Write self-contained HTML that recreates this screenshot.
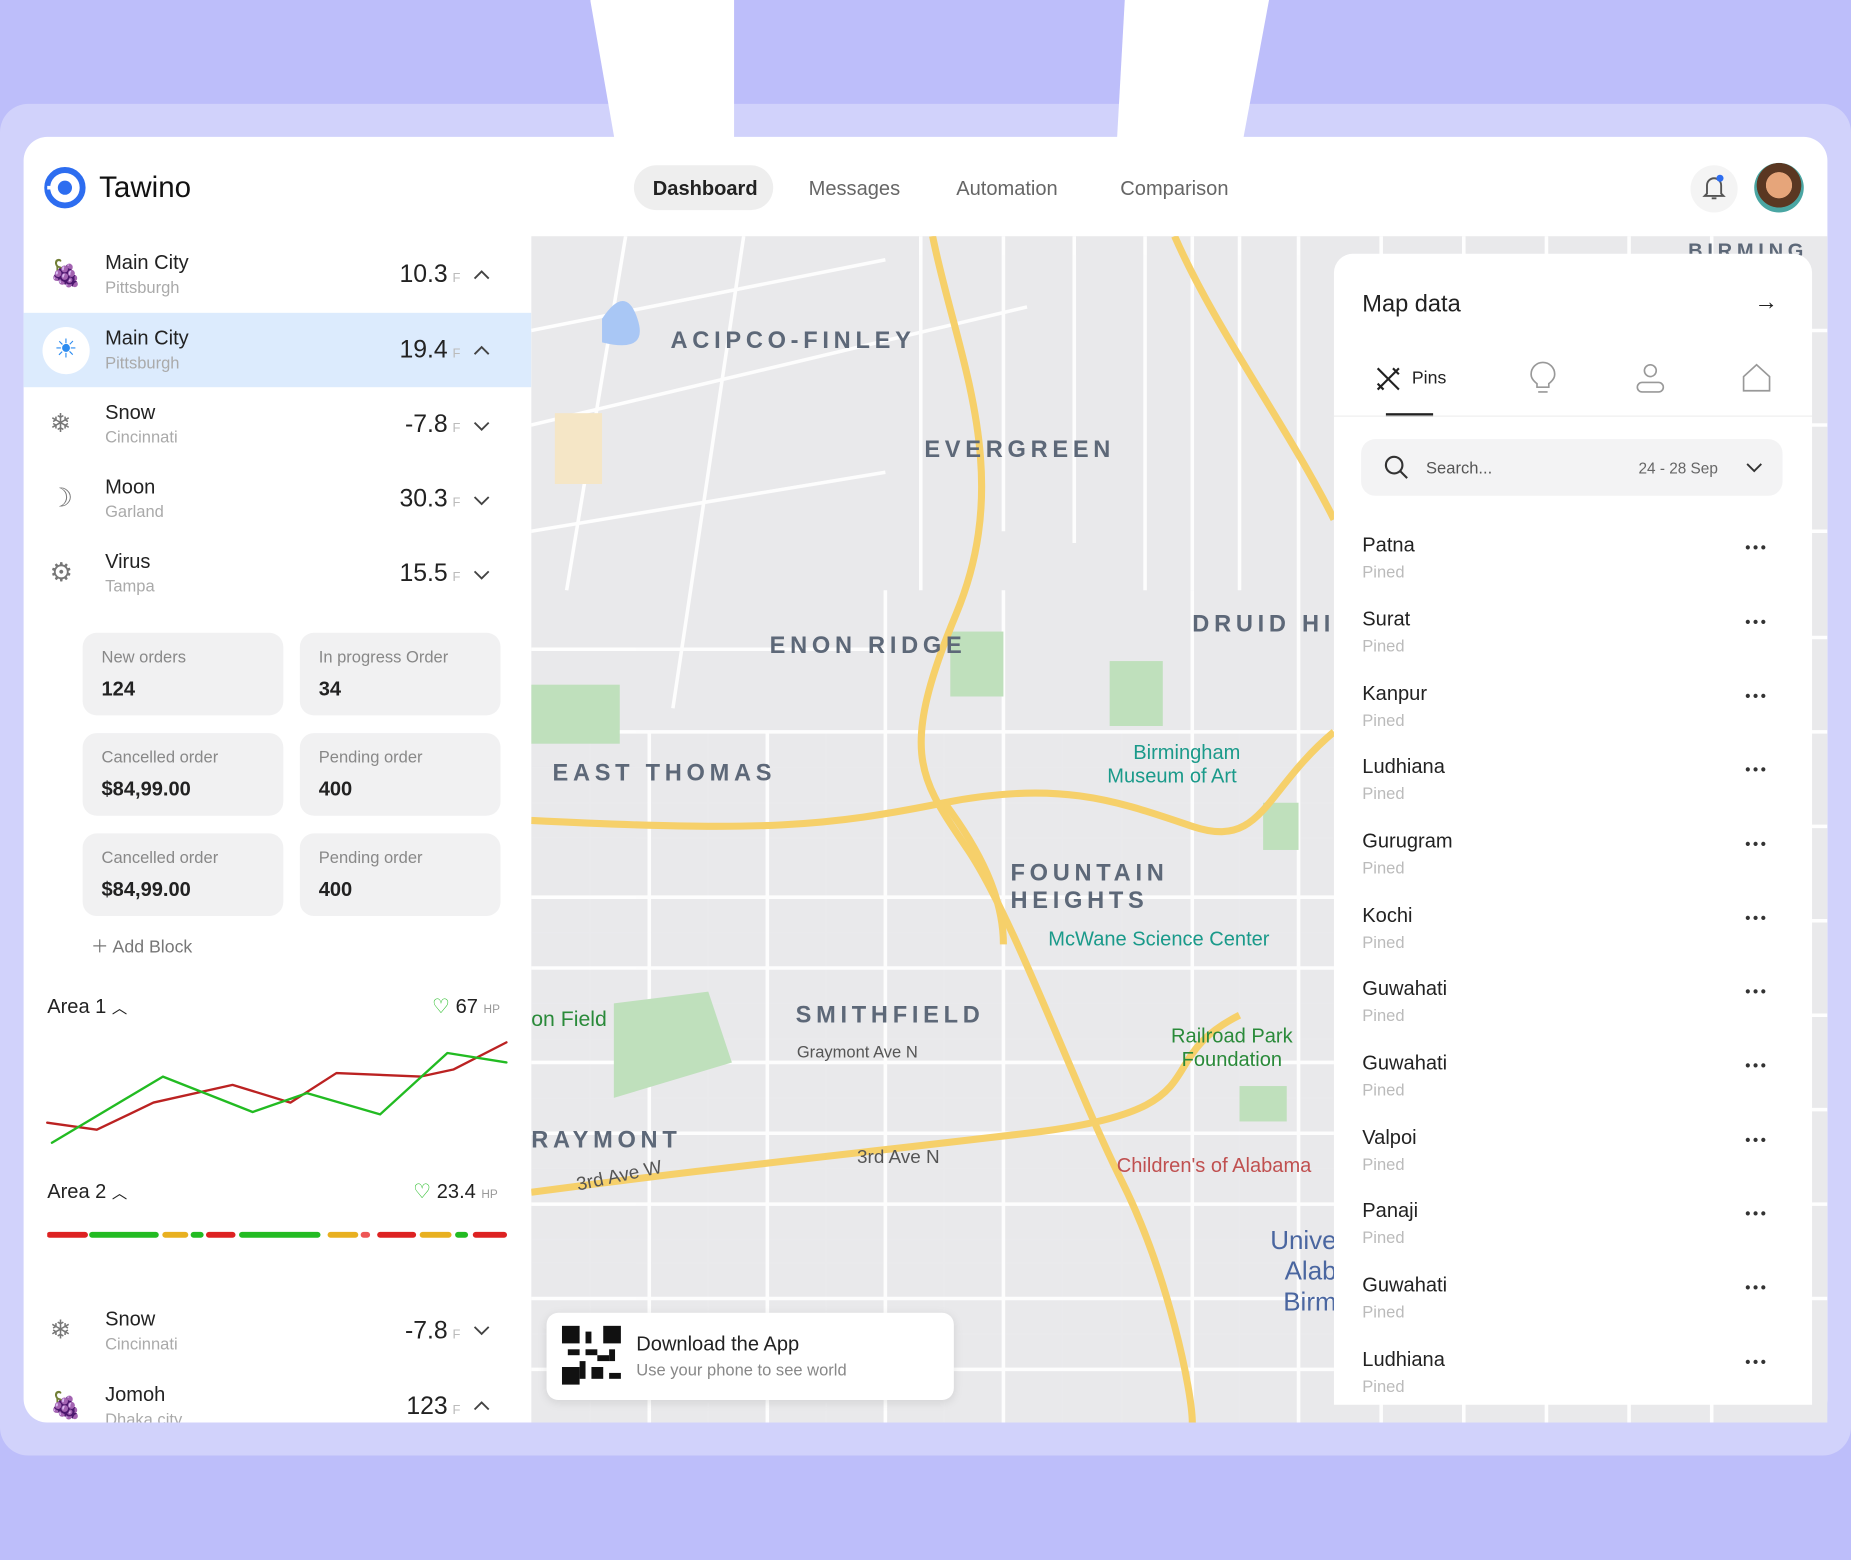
<!DOCTYPE html>
<html><head><meta charset="utf-8"><style>
*{margin:0;padding:0;box-sizing:border-box}
body{width:1851px;height:1560px;overflow:hidden;background:#bdbefa;font-family:"Liberation Sans",sans-serif;color:#222}
#w{position:absolute;left:0;top:0;width:1568px;height:1321px;transform:scale(1.18049);transform-origin:0 0}
.a{position:absolute}
.card{position:absolute;width:170px;height:70px;background:#f1f1f2;border-radius:12px;padding:12px 16px}
.card .l{font-size:14px;color:#888}.card .v{font-size:17px;font-weight:bold;margin-top:10px;color:#222}
.row{position:absolute;left:20px;width:430px;height:63px}
.row .n{position:absolute;left:69px;top:12px;font-size:17px}
.row .c{position:absolute;left:69px;top:34px;font-size:14px;color:#aaa}
.row .v{position:absolute;right:60px;top:20px;font-size:21px}
.row .v small{font-size:11px;color:#bbb;margin-left:4px}
.row .ic{position:absolute;left:22px;top:18px;font-size:22px;color:#777}
.pin{position:absolute;left:1154px;width:360px}
.pin .n{font-size:17px;color:#222}.pin .p{font-size:14px;color:#bbb;margin-top:4px}
.pin .d{position:absolute;right:16px;top:4px;font-size:13px;letter-spacing:2px;color:#333}
.ml{position:absolute;font-size:20px;letter-spacing:4px;color:#5d6878;font-weight:bold}
.ms{position:absolute;font-size:14px;color:#555}
</style></head><body><div id="w">
<div class="a" style="left:0;top:88px;width:1568px;height:1145px;background:#d1d2fb;border-radius:24px"></div>
<div class="a" style="left:500px;top:0;width:122px;height:140px;background:#fff;clip-path:polygon(0 0,100% 0,100% 100%,20% 100%)"></div>
<div class="a" style="left:945px;top:0;width:130px;height:140px;background:#fff;clip-path:polygon(0 100%,6% 0,100% 0,80% 100%)"></div>
<div class="a" style="left:20px;top:116px;width:1528px;height:1089px;background:#fff;border-radius:20px;overflow:hidden"></div>
<svg class="a" style="left:37px;top:141px" width="36" height="36" viewBox="0 0 36 36"><circle cx="18" cy="18" r="15" fill="none" stroke="#2d6df0" stroke-width="5"/><circle cx="18" cy="18" r="6" fill="#2d6df0"/><path d="M3 18h6" stroke="#fff" stroke-width="3"/></svg>
<div class="a" style="left:84px;top:145px;font-size:25px;color:#111">Tawino</div>
<div class="a" style="left:537px;top:140px;width:118px;height:38px;background:#eee;border-radius:19px"></div>
<div class="a" style="left:553px;top:150px;font-size:17px;font-weight:bold">Dashboard</div>
<div class="a" style="left:685px;top:150px;font-size:17px;color:#666">Messages</div>
<div class="a" style="left:810px;top:150px;font-size:17px;color:#666">Automation</div>
<div class="a" style="left:949px;top:150px;font-size:17px;color:#666">Comparison</div>
<div class="a" style="left:1432px;top:140px;width:40px;height:40px;border-radius:20px;background:#f4f4f4"></div>
<svg class="a" style="left:1440px;top:146px" width="24" height="26" viewBox="0 0 24 26"><path d="M6 18V11a6 6 0 0 1 12 0v7l2 2H4z M10 22h4" fill="none" stroke="#555" stroke-width="1.6"/><circle cx="17" cy="5" r="3" fill="#2d6df0"/></svg>
<div class="a" style="left:1486px;top:138px;width:42px;height:42px;border-radius:21px;background:radial-gradient(circle at 50% 45%,#e6a57a 0 35%,#5a3722 36% 60%,#4aa6a3 61%)"></div>
<div class="row" style="top:201px"><div class="ic" style="color:#6a3b9a">🍇</div><div class="n">Main City</div><div class="c">Pittsburgh</div><div class="v">10.3<small>F</small></div></div>
<div class="row" style="top:265px;background:#dcebfd"><div class="a" style="left:16px;top:12px;width:40px;height:40px;border-radius:20px;background:#fff"></div><div class="ic" style="color:#2d8cf0;left:26px">☀</div><div class="n">Main City</div><div class="c">Pittsburgh</div><div class="v">19.4<small>F</small></div></div>
<div class="row" style="top:328px"><div class="ic">❄</div><div class="n">Snow</div><div class="c">Cincinnati</div><div class="v">-7.8<small>F</small></div></div>
<div class="row" style="top:391px"><div class="ic">☽</div><div class="n">Moon</div><div class="c">Garland</div><div class="v">30.3<small>F</small></div></div>
<div class="row" style="top:454px"><div class="ic">⚙</div><div class="n">Virus</div><div class="c">Tampa</div><div class="v">15.5<small>F</small></div></div>
<svg class="a" style="left:398px;top:225px" width="20" height="280" viewBox="0 0 20 280" fill="none" stroke="#444" stroke-width="1.6"><path d="M4 11l6-6 6 6M4 75l6-6 6 6M4 133l6 6 6-6M4 196l6 6 6-6M4 259l6 6 6-6"/></svg>
<div class="card" style="left:70px;top:536px"><div class="l">New orders</div><div class="v">124</div></div>
<div class="card" style="left:254px;top:536px"><div class="l">In progress Order</div><div class="v">34</div></div>
<div class="card" style="left:70px;top:621px"><div class="l">Cancelled order</div><div class="v">$84,99.00</div></div>
<div class="card" style="left:254px;top:621px"><div class="l">Pending order</div><div class="v">400</div></div>
<div class="card" style="left:70px;top:706px"><div class="l">Cancelled order</div><div class="v">$84,99.00</div></div>
<div class="card" style="left:254px;top:706px"><div class="l">Pending order</div><div class="v">400</div></div>
<div class="a" style="left:77px;top:791px;font-size:15px;color:#777">＋ Add Block</div>
<div class="a" style="left:40px;top:843px;font-size:17px">Area 1 <span style="font-size:13px">︿</span></div>
<div class="a" style="left:366px;top:843px;font-size:17px"><span style="color:#2b2">♡</span> 67 <span style="font-size:10px;color:#999">HP</span></div>
<svg class="a" style="left:38px;top:875px" width="395" height="100" viewBox="0 0 395 100" fill="none" stroke-width="2" stroke-linejoin="round" stroke-linecap="round"><polyline points="2,76 44,82 92,59 159,44 208,59 247,34 318,37 346,31 391,8" stroke="#b22"/><polyline points="6,93 100,37 176,67 222,51 284,69 341,17 391,25" stroke="#2b2"/></svg>
<div class="a" style="left:40px;top:1000px;font-size:17px">Area 2 <span style="font-size:13px">︿</span></div>
<div class="a" style="left:350px;top:1000px;font-size:17px"><span style="color:#2b2">♡</span> 23.4 <span style="font-size:10px;color:#999">HP</span></div>
<svg class="a" style="left:40px;top:1042px" width="390" height="8"><g stroke-width="5" stroke-linecap="round"><path d="M2 4h30" stroke="#d22"/><path d="M38 4h54" stroke="#2b2"/><path d="M100 4h17" stroke="#e8b020"/><path d="M124 4h6" stroke="#2b2"/><path d="M137 4h20" stroke="#d22"/><path d="M165 4h64" stroke="#2b2"/><path d="M240 4h21" stroke="#e8b020"/><path d="M268 4h3" stroke="#e55"/><path d="M282 4h28" stroke="#d22"/><path d="M318 4h22" stroke="#e8b020"/><path d="M348 4h6" stroke="#2b2"/><path d="M363 4h24" stroke="#d22"/></g></svg>
<div class="row" style="top:1096px"><div class="ic">❄</div><div class="n">Snow</div><div class="c">Cincinnati</div><div class="v">-7.8<small>F</small></div></div>
<div class="a" style="left:20px;top:1160px;width:430px;height:45px;overflow:hidden"><div class="row" style="left:0;top:0"><div class="ic" style="color:#a33">🍇</div><div class="n">Jomoh</div><div class="c">Dhaka city</div><div class="v">123<small>F</small></div></div></div>
<svg class="a" style="left:398px;top:1118px" width="20" height="80" fill="none" stroke="#444" stroke-width="1.6"><path d="M4 6l6 6 6-6M4 76l6-6 6 6"/></svg>
<svg class="a" style="left:450px;top:200px" width="1098" height="1005" viewBox="0 0 1098 1005">
<rect width="1098" height="1005" fill="#e9e9eb"/>
<g stroke="#ececee" stroke-width="1" opacity=".6"><path d="M0 450H680M0 480H680M0 510H680M0 590H680M0 650H680M0 680H680M0 730H680M0 790H680M0 850H680M0 870H680M0 930H680M50 420V1005M150 420V1005M250 420V1005M350 420V1005M450 420V1005M500 420V1005M600 420V1005"/></g>
<g stroke="#fff" stroke-width="3" fill="none" opacity=".95">
<path d="M0 80L300 20M0 160L420 60M0 250L300 200M80 0L30 300M180 0L120 400"/>
<path d="M0 420H680M0 560H700M0 620H680M0 760H680M0 900H680M100 420V1005M200 420V1005M300 300V1005M400 300V1005M560 300V1005M650 0V1005"/>
<path d="M330 0V300M400 0V250M460 0V260M520 0V300M560 0V300M600 0V300M720 0V1005M790 0V1005M860 0V1005M930 0V1005M1000 0V1005M680 80H1098M680 160H1098M680 250H1098M680 340H1098M680 420H1098M680 500H1098M680 580H1098M680 660H1098M680 740H1098M680 820H1098M680 900H1098"/>
<path d="M0 350H300M0 700H680M0 820H680M0 960H680"/>
</g>
<path d="M60 70q20-30 30 0t-30 20z" fill="#a9c7f5"/>
<rect x="0" y="380" width="75" height="50" fill="#bfe0bc"/>
<rect x="355" y="335" width="45" height="55" fill="#bfe0bc"/>
<rect x="490" y="360" width="45" height="55" fill="#bfe0bc"/>
<path d="M70 650l80-10 20 60-100 30z" fill="#bfe0bc"/>
<rect x="620" y="480" width="30" height="40" fill="#bfe0bc"/>
<rect x="600" y="720" width="40" height="30" fill="#bfe0bc"/>
<rect x="20" y="150" width="40" height="60" fill="#f5e6c6"/>
<g stroke="#f6d06a" stroke-width="6" fill="none">
<path d="M340 0C360 100 410 200 360 320S330 460 370 520 460 720 500 800 560 980 560 1005"/>
<path d="M0 495C200 505 250 500 350 480S500 480 560 500 620 470 680 420"/>
<path d="M545 0C580 80 640 160 680 240"/>
<path d="M0 810C150 790 250 780 420 760S520 700 600 660"/>
<path d="M350 480C380 520 400 560 400 600"/>
</g>
</svg>
<div class="ml" style="left:568px;top:278px">ACIPCO-FINLEY</div>
<div class="ml" style="left:783px;top:370px">EVERGREEN</div>
<div class="ml" style="left:652px;top:536px">ENON RIDGE</div>
<div class="ml" style="left:468px;top:644px">EAST THOMAS</div>
<div class="ml" style="left:1010px;top:518px">DRUID HI</div>
<div class="ml" style="left:856px;top:729px;line-height:23px">FOUNTAIN<br>HEIGHTS</div>
<div class="ml" style="left:674px;top:849px">SMITHFIELD</div>
<div class="ml" style="left:450px;top:955px">RAYMONT</div>
<div class="ml" style="left:1430px;top:203px;font-size:17px">BIRMING</div>
<div class="ms" style="left:960px;top:628px;font-size:17px;color:#1a9a8a">Birmingham<br><span style="margin-left:-22px">Museum of Art</span></div>
<div class="ms" style="left:888px;top:786px;font-size:17px;color:#1a9a8a">McWane Science Center</div>
<div class="ms" style="left:992px;top:868px;font-size:17px;color:#2a8a3a;text-align:center">Railroad Park<br>Foundation</div>
<div class="ms" style="left:946px;top:978px;font-size:17px;color:#c05050">Children's of Alabama</div>
<div class="ms" style="left:1076px;top:1038px;font-size:22px;color:#4a66a0;line-height:26px;text-align:right">Unive<br>Alab<br>Birm</div>
<div class="ms" style="left:675px;top:883px">Graymont Ave N</div>
<div class="ms" style="left:726px;top:972px;font-size:16px">3rd Ave N</div>
<div class="ms" style="left:488px;top:988px;font-size:16px;transform:rotate(-12deg)">3rd Ave W</div>
<div class="ms" style="left:450px;top:853px;font-size:18px;color:#2a8a3a">on Field</div>
<div class="a" style="left:463px;top:1112px;width:345px;height:74px;background:#fff;border-radius:10px;box-shadow:0 2px 8px rgba(0,0,0,.1)"></div>
<svg class="a" style="left:476px;top:1123px" width="50" height="50" viewBox="0 0 10 10"><rect width="10" height="10" fill="#fff"/><g fill="#111"><rect x="0" y="0" width="3" height="3"/><rect x="7" y="0" width="3" height="3"/><rect x="0" y="7" width="3" height="3"/><rect x="4" y="1" width="1" height="2"/><rect x="4" y="4" width="2" height="1"/><rect x="6" y="5" width="2" height="1"/><rect x="3" y="6" width="1" height="3"/><rect x="5" y="7" width="2" height="2"/><rect x="8" y="8" width="2" height="1"/><rect x="1" y="4" width="2" height="1"/><rect x="8" y="4" width="1" height="2"/></g></svg>
<div class="a" style="left:539px;top:1129px;font-size:17px">Download the App</div>
<div class="a" style="left:539px;top:1152px;font-size:14px;color:#888">Use your phone to see world</div>
<div class="a" style="left:1130px;top:215px;width:405px;height:975px;background:#fff;border-radius:16px 16px 0 0"></div>
<div class="a" style="left:1154px;top:247px;font-size:20px;color:#222">Map data</div>
<div class="a" style="left:1486px;top:245px;font-size:20px">→</div>
<svg class="a" style="left:1164px;top:309px" width="24" height="24" fill="none" stroke="#222" stroke-width="1.8"><path d="M3 3l18 18M21 3L3 21M16 3l5 5M3 16l5 5"/></svg>
<div class="a" style="left:1196px;top:312px;font-size:15px">Pins</div>
<div class="a" style="left:1174px;top:350px;width:40px;height:3px;background:#222"></div>
<div class="a" style="left:1130px;top:352px;width:405px;height:1px;background:#eee"></div>
<svg class="a" style="left:1294px;top:306px" width="26" height="30" fill="none" stroke="#999" stroke-width="1.4"><path d="M8 22v-3C4 16 3 13 3 11a10 10 0 0 1 20 0c0 2-1 5-5 8v3zM9 26h8"/></svg>
<svg class="a" style="left:1384px;top:306px" width="28" height="30" fill="none" stroke="#999" stroke-width="1.4"><circle cx="14" cy="8" r="5"/><rect x="3" y="18" width="22" height="8" rx="4"/></svg>
<svg class="a" style="left:1474px;top:306px" width="28" height="28" fill="none" stroke="#999" stroke-width="1.4"><path d="M3 13L14 3l11 10v12H3z"/></svg>
<div class="a" style="left:1153px;top:372px;width:357px;height:48px;background:#f3f3f4;border-radius:12px"></div>
<svg class="a" style="left:1172px;top:385px" width="22" height="22" fill="none" stroke="#333" stroke-width="1.8"><circle cx="9" cy="9" r="7"/><path d="M14 14l6 6"/></svg>
<div class="a" style="left:1208px;top:388px;font-size:14px;color:#555">Search...</div>
<div class="a" style="left:1388px;top:389px;font-size:13px;color:#666">24 - 28 Sep</div>
<svg class="a" style="left:1478px;top:390px" width="16" height="12" fill="none" stroke="#333" stroke-width="1.6"><path d="M2 3l6 6 6-6"/></svg>
<div class="pin" style="top:452px"><div class="n">Patna</div><div class="p">Pined</div><div class="d">•••</div></div>
<div class="pin" style="top:515px"><div class="n">Surat</div><div class="p">Pined</div><div class="d">•••</div></div>
<div class="pin" style="top:578px"><div class="n">Kanpur</div><div class="p">Pined</div><div class="d">•••</div></div>
<div class="pin" style="top:640px"><div class="n">Ludhiana</div><div class="p">Pined</div><div class="d">•••</div></div>
<div class="pin" style="top:703px"><div class="n">Gurugram</div><div class="p">Pined</div><div class="d">•••</div></div>
<div class="pin" style="top:766px"><div class="n">Kochi</div><div class="p">Pined</div><div class="d">•••</div></div>
<div class="pin" style="top:828px"><div class="n">Guwahati</div><div class="p">Pined</div><div class="d">•••</div></div>
<div class="pin" style="top:891px"><div class="n">Guwahati</div><div class="p">Pined</div><div class="d">•••</div></div>
<div class="pin" style="top:954px"><div class="n">Valpoi</div><div class="p">Pined</div><div class="d">•••</div></div>
<div class="pin" style="top:1016px"><div class="n">Panaji</div><div class="p">Pined</div><div class="d">•••</div></div>
<div class="pin" style="top:1079px"><div class="n">Guwahati</div><div class="p">Pined</div><div class="d">•••</div></div>
<div class="pin" style="top:1142px"><div class="n">Ludhiana</div><div class="p">Pined</div><div class="d">•••</div></div>
</div></body></html>
